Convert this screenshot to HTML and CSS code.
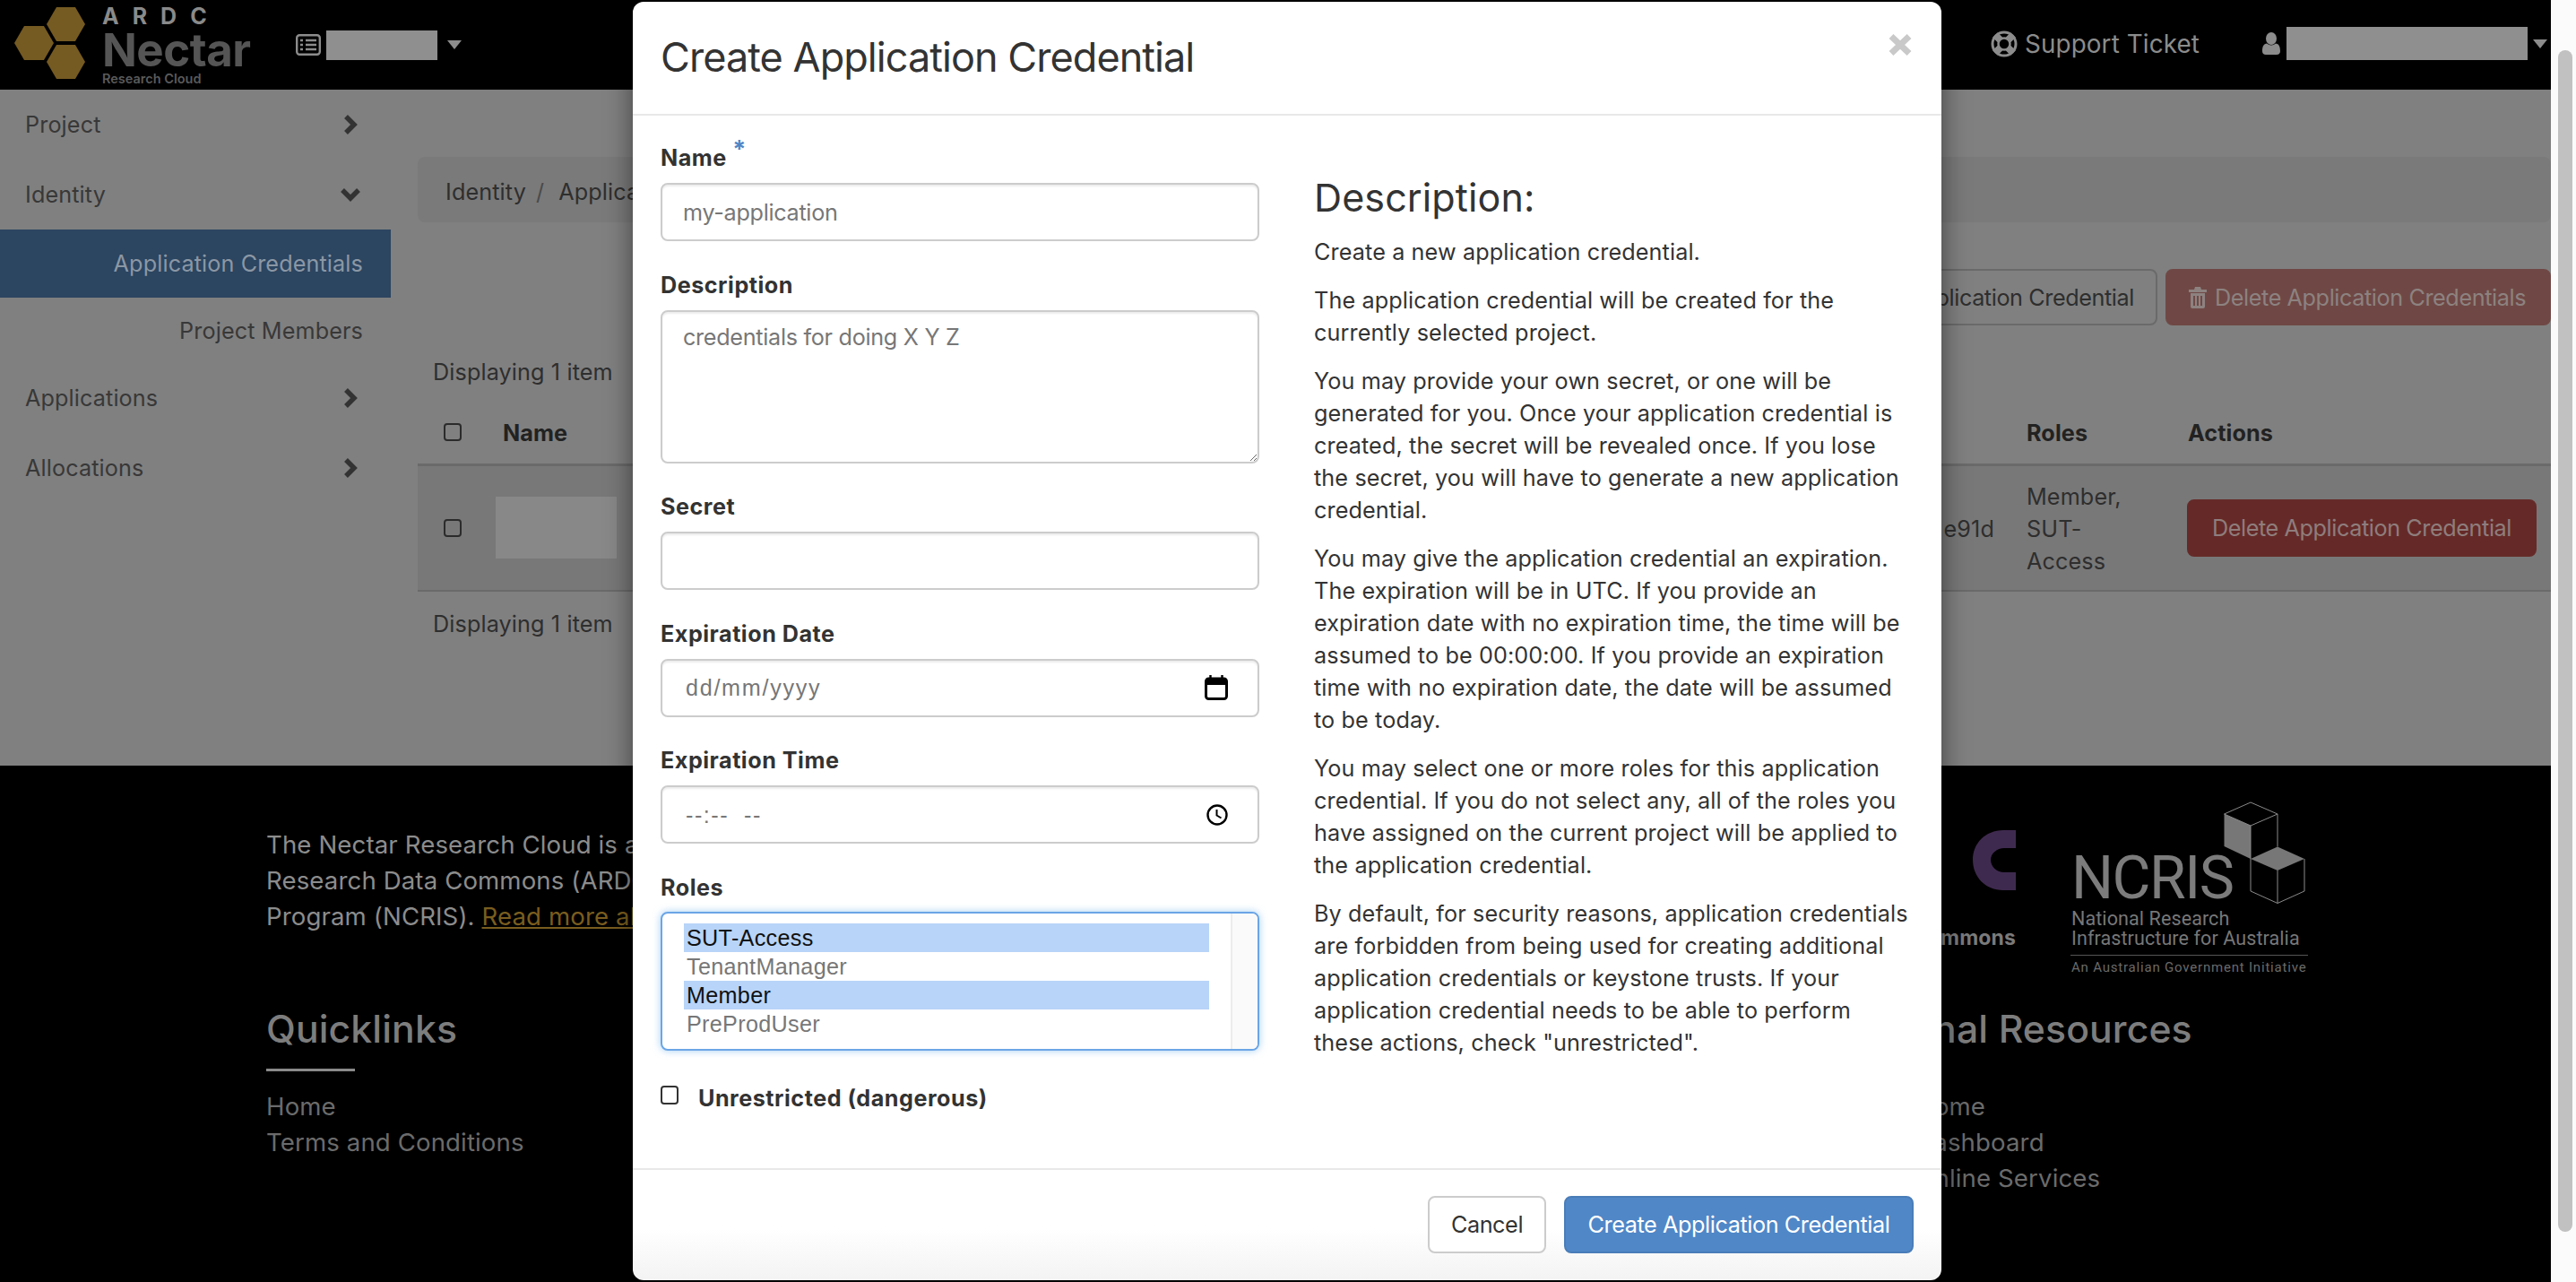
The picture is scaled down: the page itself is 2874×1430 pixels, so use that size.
FILE: index.html
```html
<!DOCTYPE html>
<html lang="en">
<head>
    <meta charset="UTF-8">
    <meta name="viewport" content="width=device-width, initial-scale=1.0">
    <title>Application Credentials</title>
    <link rel="stylesheet" href="styles.css">
</head>
<body>
    <div class="page">
        <header class="topbar">
            <div class="brand">
                <svg class="brand-hex" viewBox="0 0 80 80" width="80" height="80">
                    <polygon points="36,19 47,0 68,0 79,19 68,38 47,38"/>
                    <polygon points="0,40 11,21 33,21 44,40 33,59 11,59"/>
                    <polygon points="36,61 47,42 68,42 79,61 68,80 47,80"/>
                </svg>
                <div class="brand-text">
                    <div class="brand-ardc">ARDC</div>
                    <div class="brand-name">Nectar</div>
                    <div class="brand-sub">Research Cloud</div>
                </div>
            </div>
            <div class="project-picker">
                <svg class="icon-list" viewBox="0 0 28 24" width="28" height="24">
                    <rect x="1.2" y="1.2" width="25.6" height="21.6" rx="3" fill="none" stroke="#8c8c8c" stroke-width="2.4"/>
                    <path d="M5 7h3M11 7h12M5 12h3M11 12h12M5 17h3M11 17h12" stroke="#8c8c8c" stroke-width="2.4"/>
                </svg>
                <span class="redacted redacted-project"></span>
                <span class="caret"></span>
            </div>
            <div class="topbar-right">
                <a class="support">
                    <svg viewBox="0 0 30 30" width="30" height="30" fill="none" stroke="#8c8c8c">
                        <path d="M5 5l20 20M25 5L5 25" stroke-width="8"/>
                        <circle cx="15" cy="15" r="6.500" fill="#000" stroke-width="2.500"/>
                        <circle cx="15" cy="15" r="13" stroke-width="3"/>
                    </svg>
                    Support Ticket
                </a>
                <div class="user-menu">
                    <svg viewBox="0 0 20 25" width="20" height="25" fill="#8c8c8c">
                        <ellipse cx="10" cy="7" rx="6" ry="7"/>
                        <path d="M0 21c0-6 2-8 5-8.500 3 2.500 7 2.500 10 0 3 .5 5 2.500 5 8.500 0 2.500-1.500 4-4 4H4c-2.500 0-4-1.500-4-4z"/>
                    </svg>
                    <span class="redacted redacted-user"></span>
                    <span class="caret"></span>
                </div>
            </div>
        </header>

        <div class="main">
            <nav class="sidebar">
                <div class="nav-item">Project
                    <svg class="chevron" viewBox="0 0 16 24" width="16" height="24"><path d="M3 3l9 9-9 9"/></svg>
                </div>
                <div class="nav-item">Identity
                    <svg class="chevron chevron-down" viewBox="0 0 24 16" width="24" height="16"><path d="M3 3l9 9 9-9"/></svg>
                </div>
                <div class="nav-sub active">Application Credentials</div>
                <div class="nav-sub">Project Members</div>
                <div class="nav-item">Applications
                    <svg class="chevron" viewBox="0 0 16 24" width="16" height="24"><path d="M3 3l9 9-9 9"/></svg>
                </div>
                <div class="nav-item">Allocations
                    <svg class="chevron" viewBox="0 0 16 24" width="16" height="24"><path d="M3 3l9 9-9 9"/></svg>
                </div>
            </nav>
            <section class="content">
                <div class="breadcrumb"><span>Identity</span><span class="crumb-sep">/</span><span>Application Credentials</span></div>
                <div class="actions">
                    <button class="btn-outline">Create Application Credential</button>
                    <button class="btn-danger-off">
                        <svg viewBox="0 0 20 24" width="20" height="24" fill="#8d8280">
                            <path d="M7 0h6l1 3h6v3H0V3h6zM2 7h16v15c0 1-1 2-2 2H4c-1 0-2-1-2-2zm3 3v11h2V10zm4 0v11h2V10zm4 0v11h2V10z" fill-rule="evenodd"/>
                        </svg>
                        Delete Application Credentials
                    </button>
                </div>
                <div class="count">Displaying 1 item</div>
                <table class="cred-table">
                    <thead>
                        <tr>
                            <th class="col-check"><span class="check"></span></th>
                            <th class="col-name">Name</th>
                            <th class="col-id"></th>
                            <th class="col-roles">Roles</th>
                            <th class="col-actions">Actions</th>
                        </tr>
                    </thead>
                    <tbody>
                        <tr>
                            <td class="col-check"><span class="check"></span></td>
                            <td class="col-name"><span class="redacted redacted-name"></span></td>
                            <td class="col-id">e91d</td>
                            <td class="col-roles">Member, SUT-Access</td>
                            <td class="col-actions"><button class="btn-danger">Delete Application Credential</button></td>
                        </tr>
                    </tbody>
                </table>
                <div class="count count-bottom">Displaying 1 item</div>
            </section>
        </div>

        <footer class="footer">
            <div class="footer-top">
                <p class="footer-about">The Nectar Research Cloud is a collaborative Australian<br>Research Data Commons (ARDC) project under the national<br>Program (NCRIS). <a>Read more about the cloud</a></p>
                <div class="logo-rdc">
                    <svg viewBox="0 0 48 67" width="48" height="67">
                        <path d="M48 0H34C14 0 0 15 0 33c0 19 14 34 34 34h14V47H35c-8 0-15-6-15-14 0-7 7-13 15-13h13z" fill="#3f2a4f"/>
                    </svg>
                    <div class="logo-rdc-name">Australian Research Data Commons</div>
                </div>
                <div class="logo-ncris">
                    <svg class="cubes" viewBox="0 0 92 114" width="92" height="114" fill="none" stroke="#8a8a8a" stroke-width="1">
                        <polygon points="1.500,14 31,27 31,64 1.500,50" fill="#777" stroke="none"/>
                        <polygon points="31,64 61,50.500 91,64 61,77" fill="#777" stroke="none"/>
                        <path d="M1.500 14L31 1l30 13-30 13zM31 27v37M61 14v36.500M61 77v36.500L31 100V64M61 113.500L91 100V64"/>
                    </svg>
                    <div class="ncris-word">NCRIS</div>
                    <div class="ncris-line">National Research</div>
                    <div class="ncris-line">Infrastructure for Australia</div>
                    <div class="ncris-gov">An Australian Government Initiative</div>
                </div>
            </div>
            <div class="footer-links">
                <div class="link-col link-col-first">
                    <h3>Quicklinks</h3>
                    <a>Home</a>
                    <a>Terms and Conditions</a>
                </div>
                <div class="link-col">
                    <h3 class="heading-shift">External Resources</h3>
                    <a>Nectar Home</a>
                    <a>Nectar Dashboard</a>
                    <a>Nectar Online Services</a>
                </div>
            </div>
        </footer>
    </div>

    <div class="scrollbar"><div class="scrollbar-thumb"></div></div>

    <div class="modal">
        <div class="modal-header">
            <h2>Create Application Credential</h2>
            <svg class="modal-close" viewBox="0 0 28 26" width="28" height="26">
                <path d="M4 3.500l20 19M24 3.500l-20 19" stroke="#c9c9c9" stroke-width="7"/>
            </svg>
        </div>
        <div class="modal-body">
            <form class="modal-form">
                <div class="field">
                    <label>Name <sup class="required">*</sup></label>
                    <input class="control" type="text" placeholder="my-application">
                </div>
                <div class="field">
                    <label>Description</label>
                    <textarea class="control control-area" placeholder="credentials for doing X Y Z"></textarea>
                </div>
                <div class="field">
                    <label>Secret</label>
                    <input class="control" type="text">
                </div>
                <div class="field">
                    <label>Expiration Date</label>
                    <div class="control control-icon">
                        <span class="fake-value">dd/mm/yyyy</span>
                        <svg viewBox="0 0 26 28" width="26" height="28">
                            <rect x="1.500" y="4" width="23" height="22.500" rx="3" fill="none" stroke="#000" stroke-width="3"/>
                            <path d="M1 7.500h24" stroke="#000" stroke-width="7"/>
                            <path d="M6.500 0v5M19.500 0v5" stroke="#000" stroke-width="2.400"/>
                        </svg>
                    </div>
                </div>
                <div class="field">
                    <label>Expiration Time</label>
                    <div class="control control-icon">
                        <span class="fake-value fake-time">--:--  --</span>
                        <svg viewBox="0 0 24 24" width="24" height="24">
                            <circle cx="12" cy="12" r="10.500" fill="none" stroke="#000" stroke-width="2.400"/>
                            <path d="M11.500 6v6.500l5 3" fill="none" stroke="#000" stroke-width="2"/>
                        </svg>
                    </div>
                </div>
                <div class="field field-roles">
                    <label>Roles</label>
                    <div class="role-list">
                        <div class="role-options">
                            <div class="role selected">SUT-Access</div>
                            <div class="role">TenantManager</div>
                            <div class="role selected">Member</div>
                            <div class="role">PreProdUser</div>
                        </div>
                        <div class="role-track"></div>
                    </div>
                </div>
                <div class="unrestricted">
                    <span class="check check-light"></span>
                    <span>Unrestricted (dangerous)</span>
                </div>
            </form>
            <div class="modal-help">
                <h3>Description:</h3>
                <p>Create a new application credential.</p>
                <p>The application credential will be created for the currently selected project.</p>
                <p>You may provide your own secret, or one will be generated for you. Once your application credential is created, the secret will be revealed once. If you lose the secret, you will have to generate a new application credential.</p>
                <p>You may give the application credential an expiration. The expiration will be in UTC. If you provide an expiration date with no expiration time, the time will be assumed to be 00:00:00. If you provide an expiration time with no expiration date, the date will be assumed to be today.</p>
                <p>You may select one or more roles for this application credential. If you do not select any, all of the roles you have assigned on the current project will be applied to the application credential.</p>
                <p>By default, for security reasons, application credentials are forbidden from being used for creating additional application credentials or keystone trusts. If your application credential needs to be able to perform these actions, check "unrestricted".</p>
            </div>
        </div>
        <div class="modal-footer">
            <button class="btn-cancel">Cancel</button>
            <button class="btn-primary">Create Application Credential</button>
        </div>
    </div>
</body>
</html>
```

FILE: styles.css
```css
* {
    box-sizing: border-box;
}
html, body {
    margin: 0;
    height: 100%;
}
body {
    display: flex;
    height: 1430px;
    overflow: hidden;
    font-family: Inter, "Liberation Sans", sans-serif;
    font-size: 25.2px;
    line-height: 36px;
    letter-spacing: 0.12px;
    color: #333;
    background: #000;
}
button {
    font-family: Inter, "Liberation Sans", sans-serif;
    font-size: 25.2px;
    line-height: 36px;
    letter-spacing: -0.4px;
    border-radius: 8px;
    cursor: pointer;
}
.page {
    flex: 1;
    display: flex;
    flex-direction: column;
    min-width: 0;
}

/* top bar, colours already dimmed by the modal backdrop */
.topbar {
    height: 100px;
    flex: none;
    display: flex;
    align-items: center;
    background: #000;
    color: #8c8c8c;
}
.brand {
    display: flex;
    align-items: flex-start;
    width: 330px;
    height: 100px;
    padding: 8px 0 0 16px;
}
.brand-hex {
    fill: #755a22;
    flex: none;
}
.brand-text {
    margin-left: 18px;
    font-weight: 700;
    letter-spacing: 0;
}
.brand-ardc {
    font-size: 25px;
    line-height: 20px;
    letter-spacing: 15px;
    color: #8a8a8a;
    white-space: nowrap;
}
.brand-name {
    margin-top: 3px;
    font-size: 51px;
    line-height: 50px;
    letter-spacing: -0.5px;
    color: #555;
}
.brand-sub {
    font-size: 14.500px;
    line-height: 14px;
    font-weight: 600;
    color: #5a5a5a;
    white-space: nowrap;
}
.project-picker {
    display: flex;
    align-items: center;
}
.icon-list {
    margin-right: 6px;
}
.redacted {
    display: block;
    background: #8f8f8f;
}
.redacted-project {
    width: 124px;
    height: 33px;
}
.caret {
    display: inline-block;
    border-top: 10px solid #8c8c8c;
    border-left: 8px solid transparent;
    border-right: 8px solid transparent;
    margin-left: 11px;
}
.topbar-right {
    margin-left: auto;
    display: flex;
    align-items: center;
    margin-bottom: 3px;
}
.support {
    display: flex;
    align-items: center;
    gap: 8px;
    font-size: 27.800px;
    margin-right: 70px;
}
.user-menu {
    display: flex;
    align-items: center;
    padding-right: 4px;
}
.redacted-user {
    width: 269px;
    height: 37px;
    margin-left: 7px;
}
.user-menu .caret {
    margin-left: 6px;
}

/* sidebar and content */
.main {
    height: 754px;
    flex: none;
    display: flex;
    background: #808080;
}
.sidebar {
    width: 436px;
    flex: none;
    color: #383838;
}
.nav-item {
    height: 78px;
    display: flex;
    align-items: center;
    justify-content: space-between;
    padding: 0 37px 0 28px;
}
.nav-item:first-child {
    height: 77px;
}
.nav-item:nth-child(2) {
    height: 79px;
}
.chevron {
    fill: none;
    stroke: #333;
    stroke-width: 5.500;
}
.chevron-down {
    margin-right: -4px;
}
.nav-sub {
    height: 76px;
    display: flex;
    align-items: center;
    justify-content: flex-end;
    padding-right: 31px;
}
.nav-sub.active {
    background: #2c4560;
    color: #8b97a5;
}
.nav-sub + .nav-sub {
    height: 73px;
}
.content {
    flex: 1;
    min-width: 0;
    padding: 75px 0 0 30px;
}
.breadcrumb {
    height: 73px;
    display: flex;
    align-items: center;
    padding: 4px 0 0 31px;
    background: #7a7a7a;
    border-radius: 8px;
    color: #2e2e2e;
    white-space: nowrap;
    overflow: hidden;
}
.crumb-sep {
    margin: 0 16px 0 11px;
    color: #4a4a4a;
}
.actions {
    display: flex;
    justify-content: flex-end;
    gap: 9px;
    margin-top: 52px;
}
.actions button {
    height: 63px;
    white-space: nowrap;
}
.btn-outline {
    padding: 0 24px;
    background: transparent;
    border: 2px solid #6a6a6a;
    color: #2e2e2e;
}
.btn-danger-off {
    width: 430px;
    display: flex;
    align-items: center;
    gap: 9px;
    padding: 0 24px;
    background: #6f4845;
    border: 2px solid #6f4845;
    color: #8d8280;
}
.count {
    margin-top: 34px;
    padding-left: 17px;
    color: #2e2e2e;
}
.count-bottom {
    margin-top: 18px;
}
.cred-table {
    width: 100%;
    border-collapse: collapse;
    table-layout: fixed;
}
.cred-table th {
    height: 85px;
    padding: 0 18px 16px;
    vertical-align: bottom;
    text-align: left;
    font-weight: 700;
    letter-spacing: 0.1px;
    color: #222;
    border-bottom: 3px solid #6a6a6a;
}
.cred-table td {
    height: 141px;
    padding: 0 18px;
    vertical-align: middle;
    background: #787878;
    color: #2e2e2e;
    border-bottom: 2px solid #6a6a6a;
}
.cred-table td.col-id, .cred-table td.col-roles {
    padding-top: 3px;
}
.col-check {
    width: 77px;
}
.col-name {
    width: 300px;
}
.col-roles {
    width: 180px;
}
.col-actions {
    width: 423px;
}
.col-id {
    text-align: right;
}
.check {
    display: block;
    width: 20px;
    height: 20px;
    margin-left: 11px;
    border: 2px solid #2b2b2b;
    border-radius: 4px;
}
.cred-table th .check {
    position: relative;
    top: -9px;
}
.redacted-name {
    width: 135px;
    height: 69px;
    margin-left: -8px;
    background: #888;
}
.btn-danger {
    width: 390px;
    height: 64px;
    padding: 0;
    margin-left: -1px;
    background: #652a28;
    border: 2px solid #652a28;
    color: #8f7d7c;
    white-space: nowrap;
}

/* footer */
.footer {
    flex: 1;
    background: #000;
    padding: 40px 271px 0 297px;
}
.footer-top {
    display: flex;
    height: 226px;
    justify-content: space-between;
}
.footer-about {
    margin: 28px 0 0;
    font-size: 27.600px;
    line-height: 40px;
    color: #8c8c8c;
    white-space: nowrap;
}
.footer-about a {
    color: #7a5d1f;
    text-decoration: underline;
}
.logo-rdc {
    margin-left: auto;
    margin-right: 61px;
    padding-top: 32px;
    display: flex;
    flex-direction: column;
    align-items: flex-end;
}
.logo-rdc-name {
    margin-top: 38px;
    font-size: 23px;
    line-height: 30px;
    font-weight: 700;
    color: #7a7a7a;
    white-space: nowrap;
}
.logo-ncris {
    position: relative;
    width: 265px;
    padding: 52px 0 0 1px;
    font-family: Roboto, sans-serif;
    letter-spacing: 0;
    color: #8a8a8a;
    white-space: nowrap;
}
.cubes {
    position: absolute;
    right: 3px;
    top: 0;
}
.ncris-word {
    font-size: 66px;
    line-height: 68px;
    letter-spacing: -1.500px;
    color: #7c7c7c;
}
.ncris-line {
    font-size: 21.500px;
    line-height: 22px;
    letter-spacing: 0.1px;
    color: #777;
}
.ncris-gov {
    margin-top: 7px;
    padding-top: 3px;
    margin-left: -1px;
    padding-left: 1px;
    border-top: 1px solid #555;
    font-size: 15px;
    line-height: 20px;
    letter-spacing: 0.8px;
    color: #6a6a6a;
}
.footer-links {
    display: flex;
}
.link-col {
    display: flex;
    flex-direction: column;
    font-size: 27.600px;
    line-height: 40px;
    white-space: nowrap;
}
.link-col-first {
    width: 1744px;
}
.link-col a {
    color: #6b6b6b;
}
.link-col h3 {
    position: relative;
    margin: 0 0 38px;
    font-size: 42.700px;
    line-height: 56px;
    font-weight: 500;
    color: #7d7d7d;
}
.link-col h3.heading-shift {
    margin-left: 9px;
}
.link-col-first h3::after {
    content: "";
    position: absolute;
    left: 0;
    bottom: -19px;
    width: 99px;
    height: 3px;
    background: #8a8a8a;
}

/* page scrollbar */
.scrollbar {
    width: 28px;
    flex: none;
    padding: 56px 4px 0 8px;
    background: #fbfbfb;
}
.scrollbar-thumb {
    height: 1318px;
    border-radius: 8px;
    background: #c1c1c1;
}

/* modal */
.modal {
    position: absolute;
    left: 706px;
    top: 2px;
    width: 1460px;
    height: 1426px;
    display: flex;
    flex-direction: column;
    background: linear-gradient(to bottom, #fff 96%, #f3f3f3 100%);
    border-radius: 12px;
    box-shadow: 0 10px 30px rgba(0, 0, 0, 0.5);
}
.modal-header {
    height: 127px;
    flex: none;
    display: flex;
    justify-content: space-between;
    padding: 35px 32px 0 31px;
    border-bottom: 2px solid #e8e8e8;
}
.modal-header h2 {
    margin: 0;
    font-size: 45px;
    line-height: 54px;
    font-weight: 400;
    letter-spacing: -0.950px;
    color: #333;
}
.modal-close {
    flex: none;
}
.modal-body {
    flex: 1;
    display: grid;
    grid-template-columns: 668px 668px;
    column-gap: 61px;
    padding: 29px 31px 0;
}
.field {
    margin-bottom: 30.500px;
}
.field label, .unrestricted {
    display: block;
    font-weight: 700;
    letter-spacing: 0.5px;
    color: #333;
}
.field label {
    margin-bottom: 10px;
}
.required {
    color: #4f86c6;
    font-size: 27px;
    line-height: 0;
}
.control {
    display: block;
    width: 100%;
    height: 65px;
    padding: 0 23px;
    font-family: inherit;
    font-size: 25.200px;
    letter-spacing: -0.3px;
    color: #333;
    background: #fff;
    border: 2px solid #ccc;
    border-radius: 8px;
    box-shadow: inset 0 2px 2px rgba(0, 0, 0, 0.075);
    outline: none;
}
.control::placeholder, .fake-value {
    color: #777;
}
.control-area {
    height: 171px;
    padding-top: 10px;
    line-height: 36px;
}
.control-icon {
    display: flex;
    align-items: center;
    justify-content: space-between;
    padding: 0 33px 0 26px;
}
.fake-value {
    font-family: "Liberation Sans", Arial, sans-serif;
    letter-spacing: 1.700px;
}
.fake-time {
    letter-spacing: 1.500px;
    white-space: pre;
}
.field-roles {
    margin-bottom: 35px;
}
.field-roles label {
    margin-bottom: 9px;
}
.role-list {
    display: flex;
    height: 155px;
    background: #fff;
    border: 2px solid #6ba5e6;
    border-radius: 8px;
    box-shadow: 0 0 8px rgba(102, 175, 233, 0.6);
    overflow: hidden;
}
.role-options {
    flex: 1;
    padding: 11px 24px 0 24px;
    font-family: "Liberation Sans", Arial, sans-serif;
    letter-spacing: 0.3px;
}
.role {
    height: 32px;
    padding-left: 3px;
    line-height: 32px;
    color: #777;
}
.role.selected {
    background: #b8d4f8;
    color: #111;
}
.role-track {
    width: 30px;
    flex: none;
    background: #fafafa;
    border-left: 2px solid #ececec;
}
.unrestricted {
    display: flex;
    align-items: flex-start;
    gap: 22px;
}
.check-light {
    width: 20px;
    height: 21px;
    margin: 4px 0 0;
    border-color: #333;
    flex: none;
}
.modal-help {
    min-width: 0;
}
.modal-help h3 {
    margin: 33px 0 14px;
    font-size: 43px;
    line-height: 58px;
    font-weight: 400;
    color: #333;
}
.modal-help p {
    margin: 0 0 18px;
}
.modal-footer {
    height: 125px;
    flex: none;
    display: flex;
    justify-content: flex-end;
    align-items: flex-start;
    gap: 20px;
    padding: 29px 31px 0 0;
    border-top: 2px solid #e8e8e8;
}
.modal-footer button {
    height: 64px;
    white-space: nowrap;
}
.btn-cancel {
    width: 132px;
    background: #fff;
    border: 2px solid #ccc;
    color: #333;
}
.btn-primary {
    width: 390px;
    background: #5087c7;
    border: 2px solid #4a7db8;
    color: #fff;
}
```
